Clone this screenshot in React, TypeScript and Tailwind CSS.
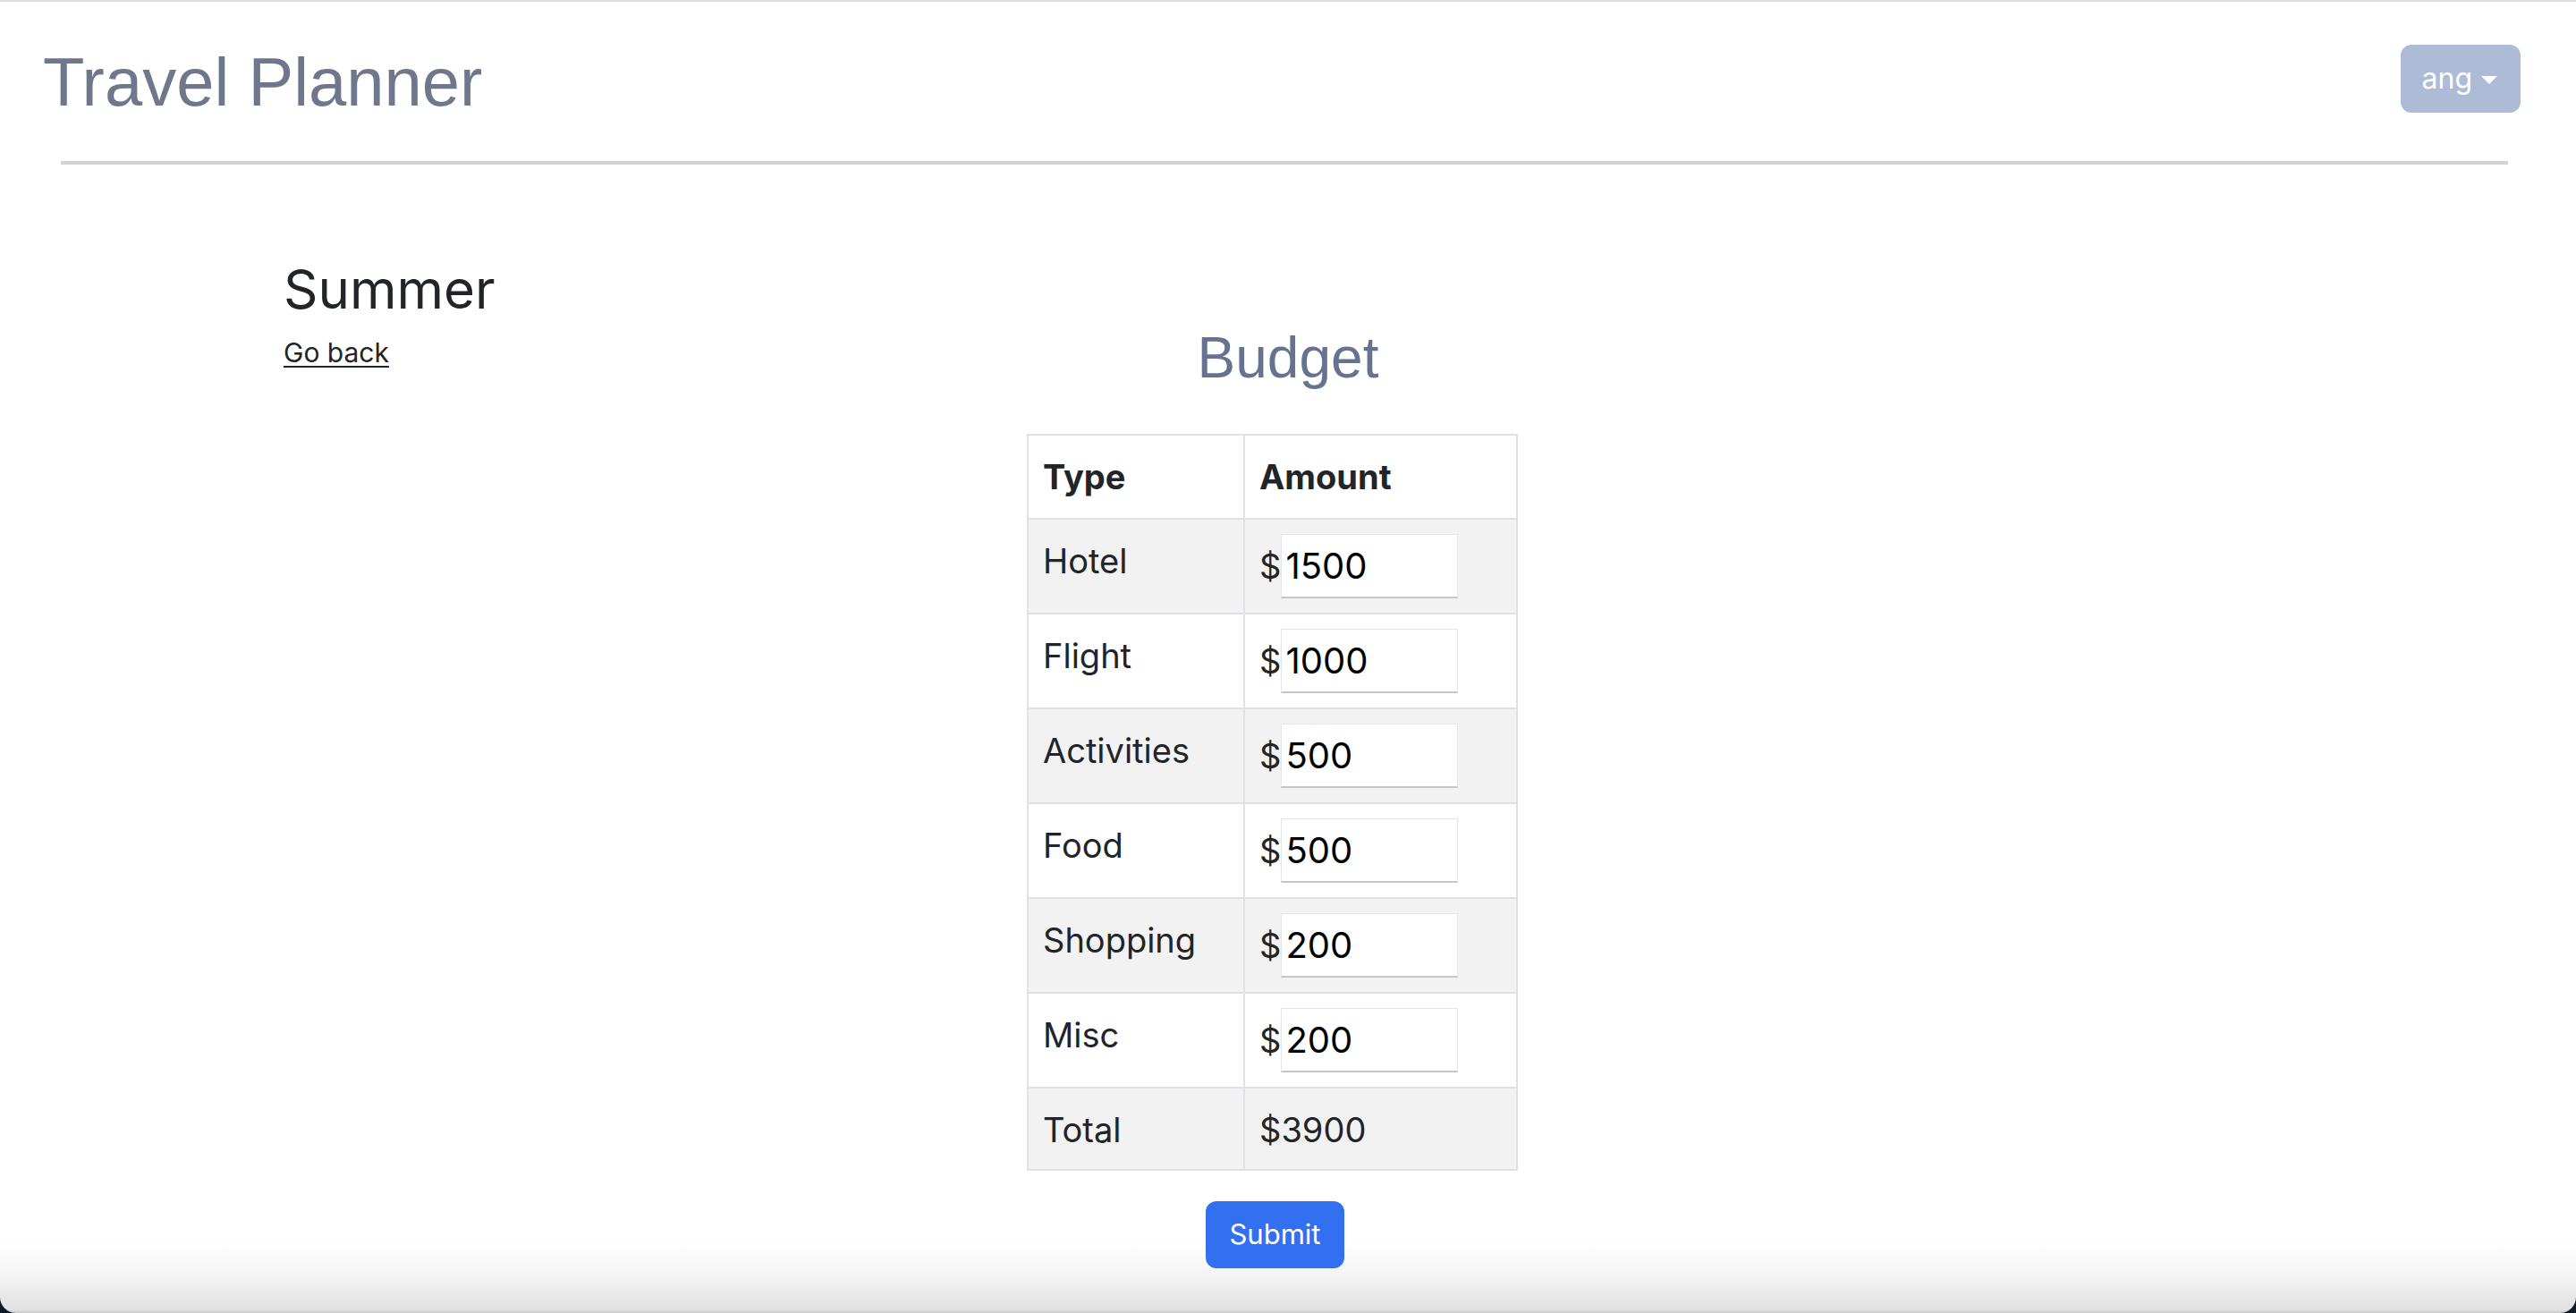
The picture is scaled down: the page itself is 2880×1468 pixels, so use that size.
import React from "react";

const rows: [string, string][] = [
  ["Hotel", "1500"],
  ["Flight", "1000"],
  ["Activities", "500"],
  ["Food", "500"],
  ["Shopping", "200"],
  ["Misc", "200"],
];

export default function App() {
  return (
    <div className="h-[1468px] w-full bg-[#0d1b2a]">
      <div className="h-[1468px] overflow-hidden rounded-b-[18px] border-t-2 border-[#dedede] bg-[linear-gradient(to_bottom,#ffffff_0px,#ffffff_1385px,#f4f4f4_1425px,#e0e0e0_1463px,#c9c9c9_1466px)] font-['Inter',sans-serif] text-[#212529]">
        <header className="flex items-start justify-between pl-[48px] pr-[62px] pt-[44px]">
          <h1 className="font-['Liberation_Sans',Arial,sans-serif] text-[76px] leading-[91px] text-[#6e778b]">
            Travel Planner
          </h1>
          <button className="mt-[4px] flex h-[76px] items-center rounded-[12px] bg-[#adbbd7] pl-[24px] pr-[26px] text-[32px] text-white">
            ang
            <span className="ml-[10px] mt-[2px] h-0 w-0 border-x-[9px] border-t-[9px] border-x-transparent border-t-white" />
          </button>
        </header>
        <div className="ml-[68px] mr-[76px] mt-[43px] h-[4px] bg-[#d3d3d3]" />

        <main className="mt-[103px]">
          <h2 className="pl-[317px] text-[60px] leading-[72px]">Summer</h2>
          <div className="grid grid-cols-[1fr_auto_1fr] items-start">
            <div className="pl-[317px] pt-[14px]">
              <a
                href="#"
                className="text-[30px] leading-[42px] text-[#212529] underline decoration-2 underline-offset-[4px]"
              >
                Go back
              </a>
            </div>
            <h2 className="mt-[3px] font-['Liberation_Sans',Arial,sans-serif] text-[64px] leading-[77px] text-[#667390]">
              Budget
            </h2>
            <div />
          </div>

          <div className="mt-[46px] flex justify-center pr-[35px]">
            <table className="w-[549px] border-collapse text-[38px] leading-[60px]">
              <thead>
                <tr className="bg-white">
                  <th className="w-[242px] border-2 border-[#dee2e6] p-[16px] text-left align-top font-bold">
                    Type
                  </th>
                  <th className="border-2 border-[#dee2e6] p-[16px] text-left align-top font-bold">
                    Amount
                  </th>
                </tr>
              </thead>
              <tbody>
                {rows.map(([label, value], i) => (
                  <tr key={label} className={i % 2 === 0 ? "bg-[#f2f2f2]" : "bg-white"}>
                    <td className="border-2 border-[#dee2e6] p-[16px] align-top">{label}</td>
                    <td className="border-2 border-[#dee2e6] p-[16px] align-top">
                      <div className="flex items-baseline">
                        <span>$</span>
                        <input
                          type="text"
                          defaultValue={value}
                          className="h-[72px] w-[198px] border border-[#e6e6e6] border-b-2 border-b-[#c6c6c6] bg-white px-[4px] text-[40px] text-black outline-none"
                        />
                      </div>
                    </td>
                  </tr>
                ))}
                <tr className="bg-[#f2f2f2]">
                  <td className="border-2 border-[#dee2e6] px-[16px] pb-[14px] pt-[16px] align-top">Total</td>
                  <td className="border-2 border-[#dee2e6] px-[16px] pb-[14px] pt-[16px] align-top">$3900</td>
                </tr>
              </tbody>
            </table>
          </div>

          <div className="mt-[34px] flex justify-center pr-[29px]">
            <button className="h-[75px] rounded-[12px] bg-[#3370f1] px-[26px] text-[31px] text-white">
              Submit
            </button>
          </div>
        </main>
      </div>
    </div>
  );
}
